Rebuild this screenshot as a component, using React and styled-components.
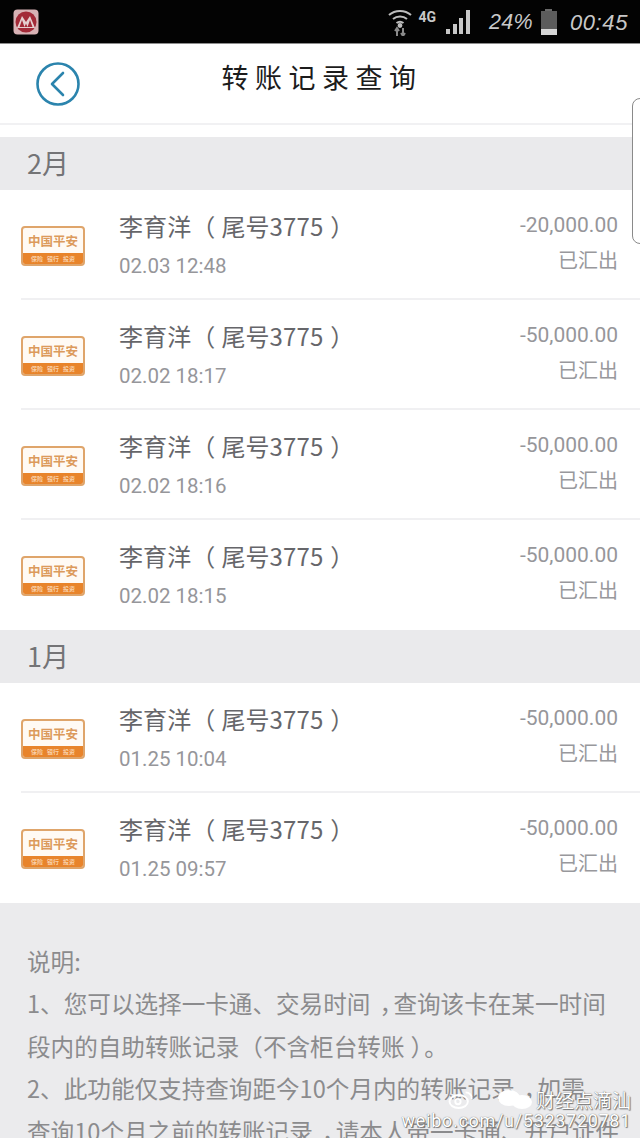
import styled, { createGlobalStyle } from "styled-components";

const GlobalStyle = createGlobalStyle`
  html, body {
    margin: 0;
    padding: 0;
    background: #ebebed;
  }
  body {
    font-family: "Roboto", "Noto Sans CJK SC", sans-serif;
  }
`;

const februaryRows = [
  { date: "02.03 12:48", amount: "-20,000.00" },
  { date: "02.02 18:17", amount: "-50,000.00" },
  { date: "02.02 18:16", amount: "-50,000.00" },
  { date: "02.02 18:15", amount: "-50,000.00" },
];

const januaryRows = [
  { date: "01.25 10:04", amount: "-50,000.00" },
  { date: "01.25 09:57", amount: "-50,000.00" },
];

function BankLogo() {
  return (
    <LogoBox>
      <LogoName>中国平安</LogoName>
      <LogoStrip>
        <span>保险</span>
        <span>银行</span>
        <span>投资</span>
      </LogoStrip>
    </LogoBox>
  );
}

function TransferRow({ date, amount, last }) {
  return (
    <Row $last={last}>
      <LogoCell>
        <BankLogo />
      </LogoCell>
      <RowBody>
        <div>
          <Name>
            李育洋<Paren $after={6}>（</Paren>尾号3775<Paren $before={7}>）</Paren>
          </Name>
          <DateText>{date}</DateText>
        </div>
        <AmountColumn>
          <Amount>{amount}</Amount>
          <Status>已汇出</Status>
        </AmountColumn>
      </RowBody>
    </Row>
  );
}

function MonthGroup({ month, rows }) {
  return (
    <>
      <MonthBar>{month}</MonthBar>
      <RowList>
        {rows.map((row, index) => (
          <TransferRow
            key={row.date}
            date={row.date}
            amount={row.amount}
            last={index === rows.length - 1}
          />
        ))}
      </RowList>
    </>
  );
}

export default function App() {
  return (
    <Page>
      <GlobalStyle />
      <StatusBar>
        <AppIcon viewBox="0 0 26 26">
          <rect x="0.5" y="0.5" width="25" height="25" rx="4" fill="#d8b2b5" />
          <circle cx="13" cy="13" r="10.5" fill="#a32a38" />
          <path d="M4 19 L9 7 L13 13 L17 7 L22 19 Z" fill="#e6cfd0" />
          <path d="M9 11 L11.5 18 H6.5 Z M17 11 L19.5 18 H14.5 Z M13 14.5 L14.5 18 H11.5 Z" fill="#a32a38" />
        </AppIcon>
        <StatusRight>
          <WifiIcon viewBox="0 0 24 27" fill="none" stroke="#bdbdbd" strokeWidth="2">
            <path d="M1 6 C7 0.5 17 0.5 23 6" />
            <path d="M5 10 C9 6.5 15 6.5 19 10" />
            <path d="M8.5 14 C10.5 12.5 13.5 12.5 15.5 14" />
            <circle cx="12" cy="16.5" r="1.4" fill="#bdbdbd" />
            <path d="M9 27 V20 M7 22 L9 19 L11 22 M15 19 V26 M13 24 L15 27 L17 24" stroke="#8a8a8a" />
          </WifiIcon>
          <NetworkLabel>4G</NetworkLabel>
          <SignalBars>
            <SignalBar $height={5} />
            <SignalBar $height={10} />
            <SignalBar $height={16} />
            <SignalBar $height={24} />
          </SignalBars>
          <Percent>24%</Percent>
          <Battery>
            <BatteryCap />
            <BatteryBody />
          </Battery>
          <Clock>00:45</Clock>
        </StatusRight>
      </StatusBar>
      <Header>
        <BackButton>
          <svg width="44" height="44" viewBox="0 0 44 44" fill="none">
            <circle cx="22" cy="22" r="20.5" stroke="#2b84ad" strokeWidth="2.6" />
            <path d="M27 11 L16 22 L27 33" stroke="#2b84ad" strokeWidth="2.6" strokeLinecap="round" strokeLinejoin="round" />
          </svg>
        </BackButton>
        <Title>转账记录查询</Title>
      </Header>
      <Spacer />
      <MonthGroup month="2月" rows={februaryRows} />
      <MonthGroup month="1月" rows={januaryRows} />
      <Notes>
        <p>说明:</p>
        <p>
          1、您可以选择一卡通、交易时间<Comma>，</Comma>查询该卡在某一时间
          <br />
          段内的自助转账记录（不含柜台转账<Paren $before={6} $after={2}>）</Paren>。
        </p>
        <p>
          2、此功能仅支持查询距今10个月内的转账记录<Comma>，</Comma>如需
          <br />
          查询10个月之前的转账记录<Comma>，</Comma>请本人带一卡通、开户证件
        </p>
      </Notes>
      <EdgeHandle />
      <Watermark>
        <WatermarkTop>
          <svg width="26" height="20" viewBox="0 0 34 24" fill="none" stroke="#ffffff" strokeWidth="2.5">
            <ellipse cx="14" cy="14" rx="12" ry="8.5" />
            <circle cx="13" cy="14" r="3.5" />
            <path d="M23 2 C28 2 32 6 31 11" />
          </svg>
          <BubbleIcon viewBox="0 0 40 22" fill="#ffffff">
            <ellipse cx="15" cy="9" rx="11" ry="8" />
            <ellipse cx="28" cy="13" rx="10" ry="7" />
          </BubbleIcon>
          <span>财经点滴汕</span>
        </WatermarkTop>
        <WatermarkUrl>weibo.com/u/5323720781</WatermarkUrl>
      </Watermark>
    </Page>
  );
}

const Page = styled.div`
  position: relative;
  width: 640px;
  height: 1138px;
  overflow: hidden;
  background: #ebebed;
`;

const StatusBar = styled.div`
  height: 44px;
  background: #030303;
  border-bottom: 1px solid #8d8d8d;
  box-sizing: border-box;
  display: flex;
  align-items: flex-start;
  justify-content: space-between;
  padding: 9px 12px 0 13px;
`;

const AppIcon = styled.svg`
  width: 26px;
  height: 26px;
`;

const StatusRight = styled.div`
  display: flex;
  align-items: flex-start;
  color: #c8c8c8;
`;

const WifiIcon = styled.svg`
  width: 24px;
  height: 27px;
`;

const NetworkLabel = styled.span`
  font: bold 14px/14px "Roboto", sans-serif;
  margin: 1px 0 0 6px;
  width: 20px;
`;

const SignalBars = styled.div`
  display: flex;
  align-items: flex-end;
  gap: 2.5px;
  height: 25px;
  margin-left: 8px;
`;

const SignalBar = styled.div`
  width: 4px;
  height: ${(props) => props.$height}px;
  background: #c8c8c8;
`;

const Percent = styled.span`
  font: italic 21.5px/26px "Liberation Sans", sans-serif;
  margin-left: 19px;
  letter-spacing: 0.3px;
  width: 49px;
`;

const Battery = styled.div`
  display: flex;
  flex-direction: column;
  align-items: center;
  margin-left: 3px;
`;

const BatteryCap = styled.div`
  width: 7px;
  height: 2px;
  background: #6a6a6a;
`;

const BatteryBody = styled.div`
  width: 16px;
  height: 24px;
  background: linear-gradient(#5c5c5c 0 74%, #d6d6d6 74% 100%);
`;

const Clock = styled.span`
  font: italic 22px/28px "Liberation Sans", sans-serif;
  margin-left: 13px;
  letter-spacing: 0.6px;
`;

const Header = styled.div`
  position: relative;
  height: 79px;
  background: #ffffff;
  display: flex;
  align-items: center;
  justify-content: center;
  box-sizing: border-box;
  padding-bottom: 14px;
`;

const BackButton = styled.div`
  position: absolute;
  left: 36px;
  top: 18px;
  width: 44px;
  height: 44px;
`;

const Title = styled.h1`
  margin: 0 0 0 4px;
  font: 400 27px "Noto Sans CJK SC", sans-serif;
  letter-spacing: 6.5px;
  color: #1c1c1c;
`;

const Spacer = styled.div`
  height: 14px;
  background: #ffffff;
  border-top: 2px solid #f1f1f3;
  box-sizing: border-box;
`;

const MonthBar = styled.div`
  height: 53px;
  box-sizing: border-box;
  background: #eaeaec;
  padding-left: 27px;
  font: 400 27px/52px "Noto Sans CJK SC", sans-serif;
  color: #747476;
`;

const RowList = styled.div`
  background: #ffffff;
  padding-left: 21px;
`;

const Row = styled.div`
  display: flex;
  height: 110px;
  box-sizing: border-box;
  border-bottom: 2px solid ${(props) => (props.$last ? "#ffffff" : "#f0f0f2")};
`;

const LogoCell = styled.div`
  width: 98px;
  flex: none;
  display: flex;
  align-items: center;
`;

const LogoBox = styled.div`
  flex: none;
  width: 64px;
  height: 40px;
  margin-top: 4px;
  border: 2px solid #dfa56b;
  border-radius: 4px;
  box-sizing: border-box;
  background: #fffaf4;
  display: flex;
  flex-direction: column;
  overflow: hidden;
`;

const LogoName = styled.div`
  flex: 1;
  font: 700 12.5px/25px "Noto Sans CJK SC", sans-serif;
  color: #dc9a5c;
  text-align: center;
  white-space: nowrap;
`;

const LogoStrip = styled.div`
  height: 11px;
  background: #e8842b;
  color: #f8cfa8;
  font: 700 6px/11px "Noto Sans CJK SC", sans-serif;
  display: flex;
  justify-content: center;
  gap: 4px;
`;

const RowBody = styled.div`
  flex: 1;
  display: flex;
  justify-content: space-between;
  padding: 16px 22px 0 0;
`;

const Name = styled.div`
  font: 400 24px/40px "Noto Sans CJK SC", sans-serif;
  color: #66666a;
  white-space: nowrap;
  letter-spacing: 0.1px;
`;

const Paren = styled.span`
  margin-left: ${(props) => props.$before || 0}px;
  margin-right: ${(props) => props.$after || 0}px;
`;

const Comma = styled.span`
  display: inline-block;
  width: 23px;
  padding-left: 9px;
  box-sizing: border-box;
  white-space: nowrap;
`;

const DateText = styled.div`
  font: 400 20.5px/30px "Roboto", sans-serif;
  color: #96969a;
  margin-top: 5px;
`;

const AmountColumn = styled.div`
  text-align: right;
`;

const Amount = styled.div`
  font: 400 21px/36px "Roboto", sans-serif;
  color: #96969a;
  margin-top: 1px;
`;

const Status = styled.div`
  font: 400 20px/34px "Noto Sans CJK SC", sans-serif;
  color: #98989c;
`;

const Notes = styled.div`
  padding: 37px 0 0 27px;
  color: #8b8b8d;
  font: 400 23.6px/42.4px "Noto Sans CJK SC", sans-serif;
  white-space: nowrap;

  p {
    margin: 0;
  }
`;

const EdgeHandle = styled.div`
  position: absolute;
  right: -8px;
  top: 98px;
  width: 14px;
  height: 144px;
  background: #ffffff;
  border: 1px solid #8a8a8a;
  border-radius: 10px;
`;

const Watermark = styled.div`
  position: absolute;
  right: 9px;
  bottom: 7px;
  text-align: right;
  color: #ffffff;
  text-shadow: 0 0 1px #555, 1px 1px 1px #777;
`;

const WatermarkTop = styled.div`
  display: flex;
  align-items: center;
  justify-content: flex-end;
  gap: 2px;
  font: 400 19px/22px "Noto Sans CJK SC", sans-serif;
`;

const BubbleIcon = styled.svg`
  width: 40px;
  height: 22px;
  margin-left: 18px;
`;

const WatermarkUrl = styled.div`
  font: 400 18px/20px "Roboto", sans-serif;
  letter-spacing: 0.7px;
`;
